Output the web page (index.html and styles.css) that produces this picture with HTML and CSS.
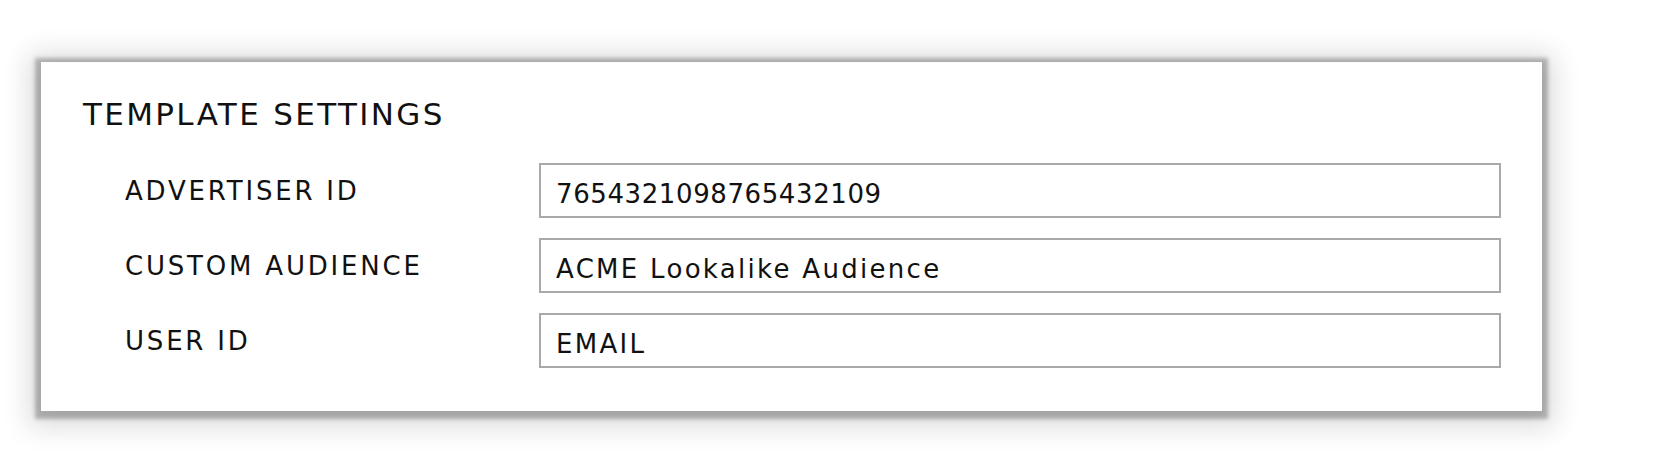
FILE: index.html
```html
<!DOCTYPE html>
<html lang="en">
<head>
<meta charset="utf-8">
<title>Template Settings</title>
<link rel="stylesheet" href="styles.css">
</head>
<body>
<div class="page">
  <section class="card">
    <h2 class="card-title">TEMPLATE SETTINGS</h2>
    <div class="form">
      <div class="label">ADVERTISER ID</div>
      <div class="field field-numeric">7654321098765432109</div>
      <div class="label">CUSTOM AUDIENCE</div>
      <div class="field">ACME Lookalike Audience</div>
      <div class="label">USER ID</div>
      <div class="field">EMAIL</div>
    </div>
  </section>
</div>
</body>
</html>
```
FILE: styles.css
```css
html, body {
  margin: 0;
  padding: 0;
  background: #ffffff;
}
body {
  font-family: "DejaVu Sans", "Liberation Sans", sans-serif;
  color: #111111;
}
.page {
  box-sizing: border-box;
  min-height: 453px;
  padding: 62px 0 42px 41px;
}
.card {
  box-sizing: border-box;
  width: 1501px;
  height: 349px;
  background: #ffffff;
  padding: 34px 41px 0 42px;
  box-shadow: 0 2px 4px 6px rgba(0, 0, 0, 0.26), 0 4px 26px 12px rgba(0, 0, 0, 0.14);
}
.card-title {
  margin: 0;
  font-size: 31px;
  font-weight: normal;
  line-height: 36px;
  letter-spacing: 2.35px;
}
.form {
  margin: 31px 0 0 42px;
  display: grid;
  grid-template-columns: 414px 1fr;
  row-gap: 20px;
  align-items: center;
}
.label {
  font-size: 26px;
  line-height: 30px;
  letter-spacing: 2.8px;
}
.field {
  box-sizing: border-box;
  height: 55px;
  border: 2px solid #a9a9a9;
  padding: 14px 15px 0;
  font-size: 26px;
  line-height: 30px;
  letter-spacing: 2.3px;
  white-space: nowrap;
}
.field-numeric {
  letter-spacing: 0.6px;
}
```
